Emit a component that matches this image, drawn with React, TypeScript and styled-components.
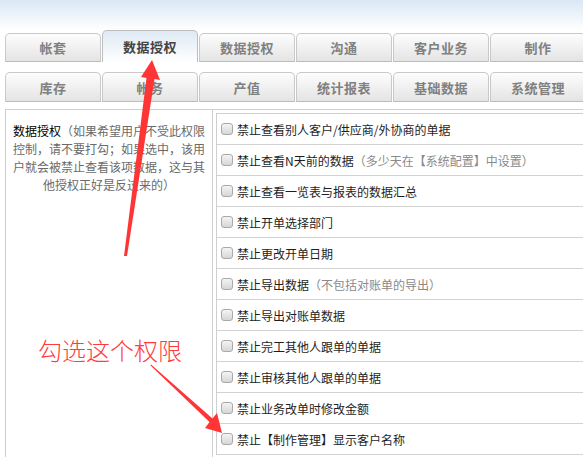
import * as React from 'react'
import styled, { createGlobalStyle } from 'styled-components'

const GlobalStyle = createGlobalStyle`
  html, body {
    margin: 0;
    padding: 0;
    background: #fff;
    overflow: hidden;
  }
  body {
    font-family: 'Noto Sans CJK SC', 'Noto Sans', sans-serif;
  }
`

const Page = styled.div`
  position: relative;
  width: 583px;
  height: 457px;
  overflow: hidden;
  background: linear-gradient(#dae7f5 0, #ffffff 30px) no-repeat;
`

const Header = styled.div`
  padding: 30px 0 0 5px;
`

const TabRow = styled.div<{ $second?: boolean }>`
  display: flex;
  align-items: flex-end;
  gap: 1px;
  height: ${p => (p.$second ? 30 : 32)}px;
  margin-top: ${p => (p.$second ? 10 : 0)}px;
`

const Tab = styled.div<{ $active?: boolean; $tall?: number }>`
  box-sizing: border-box;
  flex: 0 0 96px;
  height: ${p => p.$tall}px;
  display: flex;
  align-items: center;
  justify-content: center;
  border: 1px solid ${p => (p.$active ? '#bdbdbd' : '#c9c9c9')};
  border-bottom: ${p => (p.$active ? 'none' : '1px solid #bcbcbc')};
  border-radius: 5px 5px 0 0;
  background: ${p =>
    p.$active
      ? 'linear-gradient(#dfe9f4, #ffffff)'
      : 'linear-gradient(#fdfdfd, #e4e4e4)'};
  color: ${p => (p.$active ? '#444' : '#808080')};
  font-size: 13px;
  font-weight: bold;
  letter-spacing: 0.5px;
`

const Content = styled.div`
  display: flex;
  margin: 7px 0 0 5px;
  width: 640px;
`

const LeftPanel = styled.div`
  box-sizing: border-box;
  flex: 0 0 208px;
  height: 360px;
  border: 1px solid #cfcfcf;
  padding: 12px 5px;
  font-size: 12px;
  line-height: 18px;
  color: #6a6a6a;
  text-align: center;
`

const PanelTitle = styled.span`
  color: #000;
`

const RightPanel = styled.div`
  flex: 1;
  border-top: 1px solid #cfcfcf;
  padding: 3px 0 0 3px;
`

const RuleTable = styled.div`
  border-top: 1px solid #cfcfcf;
  border-left: 1px solid #cfcfcf;
`

const Rule = styled.div`
  display: flex;
  align-items: center;
  height: 30px;
  padding-left: 4px;
  border-bottom: 1px solid #d2d2d2;
  font-size: 12px;
  color: #1e1e1e;
`

const Check = styled.span`
  box-sizing: border-box;
  width: 12px;
  height: 12px;
  margin-right: 4px;
  border: 1px solid #a9a9a9;
  border-radius: 3px;
  background: linear-gradient(#f4f4f4, #d6d6d6);
`

const Hint = styled.span`
  color: #8a8a8a;
`

const Note = styled.div`
  position: absolute;
  left: 38px;
  top: 335px;
  font-size: 24px;
  line-height: 30px;
  color: #ff3b3b;
  font-weight: 300;
`

const Overlay = styled.svg`
  position: absolute;
  left: 0;
  top: 0;
  pointer-events: none;
`

const topTabs = ['帐套', '数据授权', '数据授权', '沟通', '客户业务', '制作']
const bottomTabs = ['库存', '帐务', '产值', '统计报表', '基础数据', '系统管理']

const rules: { text: string; hint?: string }[] = [
  { text: '禁止查看别人客户/供应商/外协商的单据' },
  { text: '禁止查看N天前的数据', hint: '（多少天在【系统配置】中设置）' },
  { text: '禁止查看一览表与报表的数据汇总' },
  { text: '禁止开单选择部门' },
  { text: '禁止更改开单日期' },
  { text: '禁止导出数据', hint: '（不包括对账单的导出）' },
  { text: '禁止导出对账单数据' },
  { text: '禁止完工其他人跟单的单据' },
  { text: '禁止审核其他人跟单的单据' },
  { text: '禁止业务改单时修改金额' },
  { text: '禁止【制作管理】显示客户名称' },
]

export default function App() {
  return (
    <Page>
      <GlobalStyle />
      <Header>
        <TabRow>
          {topTabs.map((t, i) => (
            <Tab key={i} $active={i === 1} $tall={i === 1 ? 32 : 29}>
              {t}
            </Tab>
          ))}
        </TabRow>
        <TabRow $second>
          {bottomTabs.map((t, i) => (
            <Tab key={i} $tall={30}>
              {t}
            </Tab>
          ))}
        </TabRow>
      </Header>
      <Content>
        <LeftPanel>
          <PanelTitle>数据授权</PanelTitle>
          （如果希望用户不受此权限控制，请不要打勾；如果选中，该用户就会被禁止查看该项数据，这与其他授权正好是反过来的）
        </LeftPanel>
        <RightPanel>
          <RuleTable>
            {rules.map((r, i) => (
              <Rule key={i}>
                <Check />
                <span>{r.text}</span>
                {r.hint && <Hint>{r.hint}</Hint>}
              </Rule>
            ))}
          </RuleTable>
        </RightPanel>
      </Content>
      <Note>勾选这个权限</Note>
      <Overlay width="583" height="457" viewBox="0 0 583 457">
        <polygon
          fill="#ff3535"
          points="152,60 160,80 154.5,79 127,256 124,256 146.5,78 141,77"
        />
        <polygon
          fill="#ff3535"
          points="151,364.5 212.5,418.5 217,413 222,433 205,428 209.5,422 150.5,365.5"
        />
      </Overlay>
    </Page>
  )
}
